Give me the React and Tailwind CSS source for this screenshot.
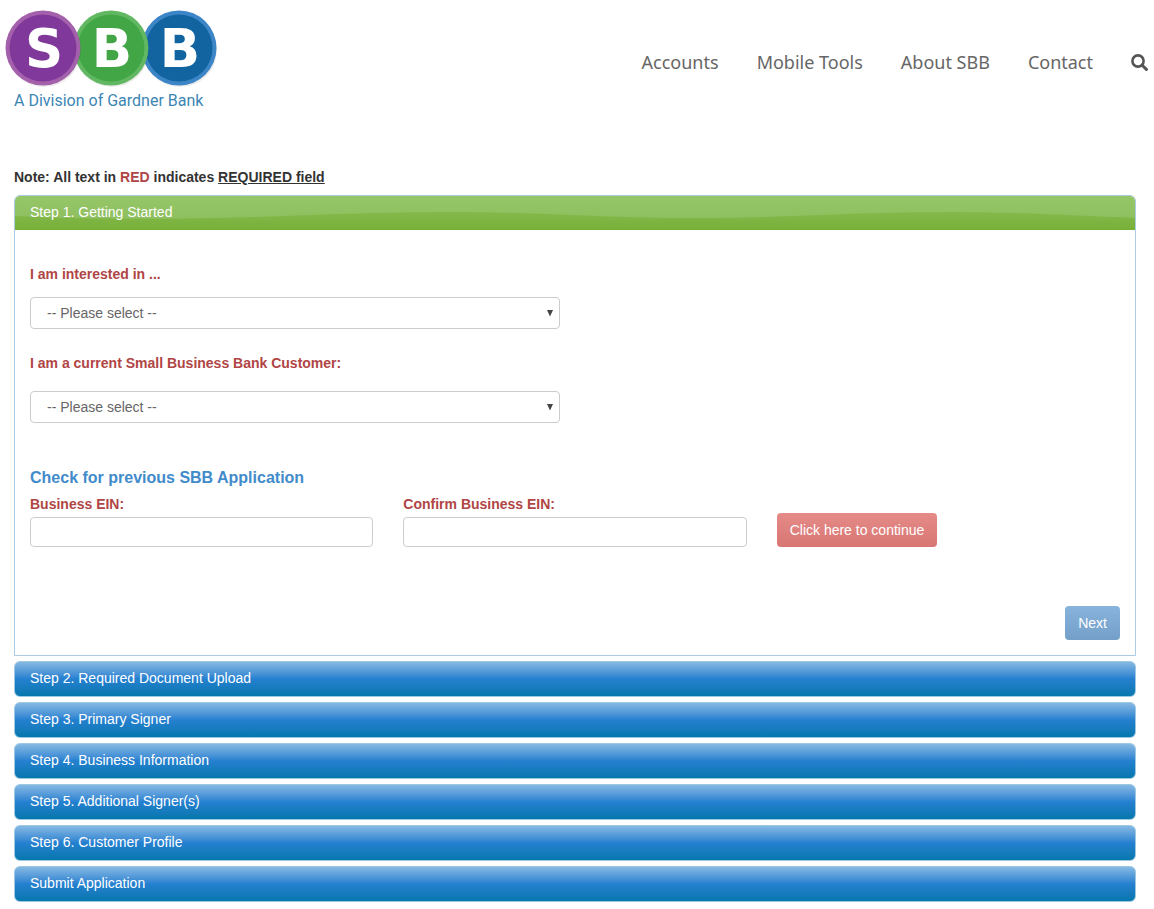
import React, { useState } from 'react';

const NAV_LINKS = ['Accounts', 'Mobile Tools', 'About SBB', 'Contact'];

const STEPS = [
  'Step 2. Required Document Upload',
  'Step 3. Primary Signer',
  'Step 4. Business Information',
  'Step 5. Additional Signer(s)',
  'Step 6. Customer Profile',
  'Submit Application',
];

const LOGO_CIRCLES = [
  { letter: 'B', cx: 179, rim: '#3c86c8', fill: '#11649f' },
  { letter: 'B', cx: 111, rim: '#62b862', fill: '#42a646' },
  { letter: 'S', cx: 43, rim: '#a461ab', fill: '#80399a' },
];

function Logo() {
  return (
    <a href="#" aria-label="SBB, A Division of Gardner Bank" className="block shrink-0">
      <svg width="224" height="116" viewBox="0 0 224 116">
        {LOGO_CIRCLES.map((c) => (
          <g key={c.cx}>
            <circle cx={c.cx + 1} cy="50" r="37" fill="#000" opacity="0.08" />
            <circle cx={c.cx} cy="48" r="37.5" fill={c.rim} />
            <circle cx={c.cx} cy="48" r="33.5" fill={c.fill} />
            <text
              x={c.cx + 1}
              y="67"
              textAnchor="middle"
              fontSize="53"
              fontWeight="bold"
              fontFamily='"DejaVu Sans", sans-serif'
              fill="#fff"
            >
              {c.letter}
            </text>
          </g>
        ))}
        <text x="14" y="106" fontSize="16" fontFamily="Roboto, sans-serif" fill="#3c86b4">
          A Division of Gardner Bank
        </text>
      </svg>
    </a>
  );
}

function SearchIcon() {
  return (
    <svg width="17" height="17" viewBox="0 0 17 17" fill="none" stroke="currentColor">
      <circle cx="7" cy="7" r="5.600" strokeWidth="2.600" />
      <path d="M11.200 11.200l4.200 4.200" strokeWidth="3" strokeLinecap="round" />
    </svg>
  );
}

function Header() {
  return (
    <header className="flex items-start justify-between pr-1.5">
      <Logo />
      <nav className="flex items-center gap-[38px] pt-12 font-['Noto_Sans',sans-serif] text-lg text-[#666]">
        {NAV_LINKS.map((link) => (
          <a key={link} href="#">{link}</a>
        ))}
        <button type="button" aria-label="Search" className="text-[#555]">
          <SearchIcon />
        </button>
      </nav>
    </header>
  );
}

function SelectField({ id, label, className }) {
  return (
    <div className={`flex flex-col ${className}`}>
      <label htmlFor={id} className="font-bold text-[#b04545]">{label}</label>
      <div className="relative">
        <select
          id={id}
          className="block h-8 w-full appearance-none rounded border border-[#ccc] bg-white px-4 text-[#666]"
        >
          <option>-- Please select --</option>
        </select>
        <svg
          className="pointer-events-none absolute right-1.5 top-3 h-2 w-2"
          viewBox="0 0 8 8"
          fill="#444"
        >
          <path d="M1 1h6L4 7.500z" />
        </svg>
      </div>
    </div>
  );
}

function TextField({ id, label, value, onChange }) {
  return (
    <div>
      <label htmlFor={id} className="block font-bold text-[#b04545]">{label}</label>
      <input
        id={id}
        type="text"
        value={value}
        onChange={(e) => onChange(e.target.value)}
        className="mt-[3px] block h-[30px] w-full rounded border border-[#ccc] px-3"
      />
    </div>
  );
}

function GettingStarted() {
  const [ein, setEin] = useState('');
  const [confirmEin, setConfirmEin] = useState('');

  return (
    <section className="rounded-t-md border border-[#a9cbe6]">
      <h2 className="relative overflow-hidden rounded-t-[5px] bg-linear-to-b from-[#95c667] to-[#8cbc5c]">
        <svg className="absolute inset-0 h-full w-full" viewBox="0 0 1120 34" preserveAspectRatio="none">
          <defs>
            <linearGradient id="wave" x1="0" y1="0" x2="0" y2="1">
              <stop offset="0" stopColor="#84b94b" />
              <stop offset="1" stopColor="#77b038" />
            </linearGradient>
          </defs>
          <path
            d="M0 20 C60 23 150 24 240 21 C320 18 380 16 440 16 C530 16 590 22 680 22 C770 22 840 16 930 16 C1010 16 1060 20 1120 22 V34 H0 Z"
            fill="url(#wave)"
          />
        </svg>
        <button type="button" className="relative block h-[34px] w-full px-[15px] pb-0.5 text-left text-white">
          Step 1. Getting Started
        </button>
      </h2>

      <div className="px-[15px] pt-[34px] pb-[15px]">
        <div className="grid grid-cols-2 gap-x-[30px]">
          <div>
            <SelectField id="interest" label="I am interested in ..." className="gap-[13px]" />
            <SelectField
              id="customer"
              label="I am a current Small Business Bank Customer:"
              className="mt-6 gap-[18px]"
            />
          </div>
        </div>

        <h3 className="mt-[43px] text-base font-bold text-[#428bca]">Check for previous SBB Application</h3>
        <div className="mt-1 grid grid-cols-3 gap-x-[30px]">
          <TextField id="ein" label="Business EIN:" value={ein} onChange={setEin} />
          <TextField id="confirm-ein" label="Confirm Business EIN:" value={confirmEin} onChange={setConfirmEin} />
          <div className="flex items-end">
            <button
              type="button"
              className="h-[34px] rounded bg-linear-to-b from-[#e58b88] to-[#d87673] px-[13px] whitespace-nowrap text-white"
            >
              Click here to continue
            </button>
          </div>
        </div>

        <div className="mt-[59px] flex justify-end">
          <button
            type="button"
            className="h-[34px] rounded bg-linear-to-b from-[#87b3dc] to-[#739fc8] px-[13px] text-white"
          >
            Next
          </button>
        </div>
      </div>
    </section>
  );
}

function StepBar({ title }) {
  return (
    <h2>
      <button
        type="button"
        className="block h-9 w-full rounded-md border border-[#9cc8e4] bg-linear-to-b from-[#85b9e3] via-[#2480d0] to-[#0477ad] px-[15px] pb-0.5 text-left text-white"
      >
        {title}
      </button>
    </h2>
  );
}

function App() {
  return (
    <div className="min-h-screen bg-white font-['Liberation_Sans',Arial,sans-serif] text-sm text-[#333]">
      <Header />
      <main className="pt-[51px] pr-[18px] pb-2 pl-[14px]">
        <p className="font-bold">
          Note: All text in <span className="text-[#b04545]">RED</span> indicates{' '}
          <span className="underline">REQUIRED field</span>
        </p>
        <div className="mt-2 space-y-[5px]">
          <GettingStarted />
          {STEPS.map((title) => (
            <StepBar key={title} title={title} />
          ))}
        </div>
      </main>
    </div>
  );
}

export default App;
